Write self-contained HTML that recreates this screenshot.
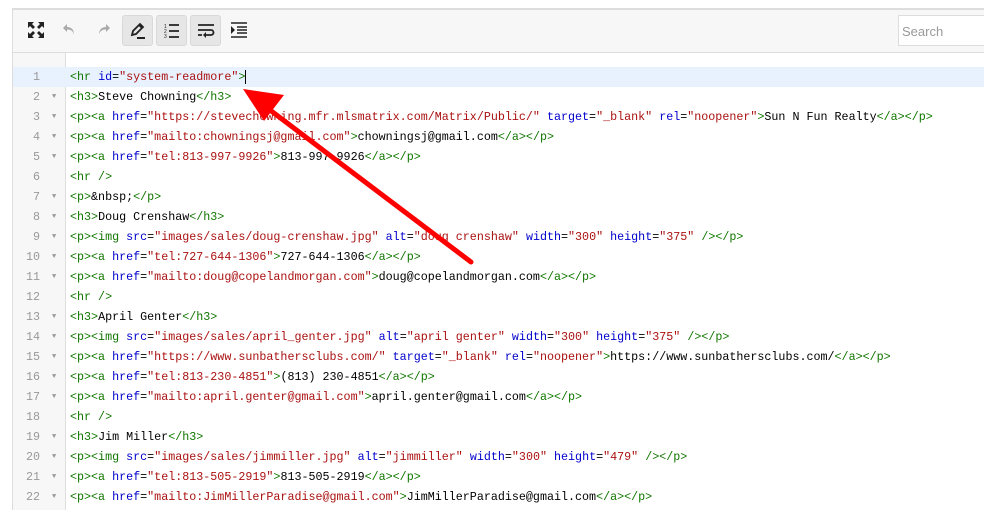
<!DOCTYPE html>
<html><head><style>
body{margin:0;width:984px;height:510px;overflow:hidden;background:#fff;font-family:"Liberation Sans",sans-serif;position:relative}
.top{position:absolute;left:12px;right:0;top:8px;height:2px;background:#ddd}
.tb{position:absolute;left:12px;right:0;top:10px;height:42px;background:#f7f7f7;border-left:1px solid #ddd;border-bottom:1px solid #ddd}
.btn{position:absolute;top:5px;width:31px;height:31px;border-radius:3px}
.btn.on{background:#e6e6e6;border:1px solid #d9d9d9;box-sizing:border-box}
.btn svg{position:absolute;left:6px;top:6px}
.search{position:absolute;left:885px;top:5px;width:100px;height:31px;border:1px solid #ddd;background:#fff;box-sizing:border-box;color:#999;font-size:13px;padding:8px 0 0 3px}
.ed{position:absolute;left:12px;right:0;top:53px;bottom:0;border-left:1px solid #ddd}
.gut{position:absolute;left:0;top:0;width:52px;bottom:0;background:#f7f7f7;border-right:1px solid #ddd}
.code{position:absolute;left:0;top:14px;right:0;font-family:"Liberation Mono",monospace;font-size:11.7px}
.l{height:20px;line-height:20px;position:relative;white-space:pre}
.l.act{background:#e8f2ff}
.n{position:absolute;left:0;width:27px;text-align:right;color:#999}
.f{position:absolute;left:39px;color:#999;font-size:7px}
.t{position:absolute;left:57px}
.g{color:#170}.b{color:#00c}.s{color:#a11}
</style></head><body>
<div class="top"></div>
<div class="tb">
<div class="btn" style="left:8px"><svg width="18" height="18" viewBox="0 0 18 18" fill="#222"><path d="M1 1h6L5 3l3 3-2 2-3-3-2 2zM17 1v6l-2-2-3 3-2-2 3-3-2-2zM1 17v-6l2 2 3-3 2 2-3 3 2 2zM17 17h-6l2-2-3-3 2-2 3 3 2-2z"/></svg></div>
<div class="btn" style="left:42px"><svg width="18" height="18" viewBox="0 0 18 18"><path d="M6 3L2 7l4 4V8.5c4 0 6 1.5 7 5 0-5-3-7.5-7-7.5z" fill="#aaa"/></svg></div>
<div class="btn" style="left:75px"><svg width="18" height="18" viewBox="0 0 18 18"><path d="M12 3l4 4-4 4V8.5c-4 0-6 1.5-7 5 0-5 3-7.5 7-7.5z" fill="#aaa"/></svg></div>
<div class="btn on" style="left:109px"><svg width="18" height="18" viewBox="0 0 18 18"><path d="M3 13l1-4 7-7 3 3-7 7zM10 3l3 3" stroke="#222" stroke-width="1.8" fill="none"/><path d="M8 15h8v2H8z" fill="#222"/></svg></div>
<div class="btn on" style="left:143px"><svg width="18" height="18" viewBox="0 0 18 18"><text x="1" y="6" font-size="5" fill="#222">1</text><text x="1" y="11" font-size="5" fill="#222">2</text><text x="1" y="16" font-size="5" fill="#222">3</text><path d="M6 3h10M6 9h10M6 15h10" stroke="#222" stroke-width="1.8"/></svg></div>
<div class="btn on" style="left:177px"><svg width="18" height="18" viewBox="0 0 18 18"><path d="M1 3h16M1 8h13a2.5 2.5 0 010 5H9M1 13h4" stroke="#222" stroke-width="1.8" fill="none"/><path d="M9 10v6l-3-3z" fill="#222"/></svg></div>
<div class="btn" style="left:211px"><svg width="18" height="18" viewBox="0 0 18 18"><path d="M1 2h16M7 6h10M7 9h10M7 12h10M1 16h16" stroke="#222" stroke-width="1.6"/><path d="M1 5v8l4-4z" fill="#222"/></svg></div>
<div class="search">Search</div>
</div>
<div class="ed"><div class="gut"></div>
<div class="code">
<div class="l act"><span class="n">1</span><span class="t"><span class="g">&lt;hr</span> <span class="b">id</span>=<span class="s">"system-readmore"</span><span class="g">&gt;</span><span style="border-left:1px solid #000"> </span></span></div>
<div class="l"><span class="n">2</span><span class="f">▼</span><span class="t"><span class="g">&lt;h3&gt;</span>Steve Chowning<span class="g">&lt;/h3&gt;</span></span></div>
<div class="l"><span class="n">3</span><span class="f">▼</span><span class="t"><span class="g">&lt;p&gt;&lt;a</span> <span class="b">href</span>=<span class="s">"https://stevechowning.mfr.mlsmatrix.com/Matrix/Public/"</span> <span class="b">target</span>=<span class="s">"_blank"</span> <span class="b">rel</span>=<span class="s">"noopener"</span><span class="g">&gt;</span>Sun N Fun Realty<span class="g">&lt;/a&gt;&lt;/p&gt;</span></span></div>
<div class="l"><span class="n">4</span><span class="f">▼</span><span class="t"><span class="g">&lt;p&gt;&lt;a</span> <span class="b">href</span>=<span class="s">"mailto:chowningsj@gmail.com"</span><span class="g">&gt;</span>chowningsj@gmail.com<span class="g">&lt;/a&gt;&lt;/p&gt;</span></span></div>
<div class="l"><span class="n">5</span><span class="f">▼</span><span class="t"><span class="g">&lt;p&gt;&lt;a</span> <span class="b">href</span>=<span class="s">"tel:813-997-9926"</span><span class="g">&gt;</span>813-997-9926<span class="g">&lt;/a&gt;&lt;/p&gt;</span></span></div>
<div class="l"><span class="n">6</span><span class="t"><span class="g">&lt;hr /&gt;</span></span></div>
<div class="l"><span class="n">7</span><span class="f">▼</span><span class="t"><span class="g">&lt;p&gt;</span>&amp;nbsp;<span class="g">&lt;/p&gt;</span></span></div>
<div class="l"><span class="n">8</span><span class="f">▼</span><span class="t"><span class="g">&lt;h3&gt;</span>Doug Crenshaw<span class="g">&lt;/h3&gt;</span></span></div>
<div class="l"><span class="n">9</span><span class="f">▼</span><span class="t"><span class="g">&lt;p&gt;&lt;img</span> <span class="b">src</span>=<span class="s">"images/sales/doug-crenshaw.jpg"</span> <span class="b">alt</span>=<span class="s">"doug crenshaw"</span> <span class="b">width</span>=<span class="s">"300"</span> <span class="b">height</span>=<span class="s">"375"</span> <span class="g">/&gt;&lt;/p&gt;</span></span></div>
<div class="l"><span class="n">10</span><span class="f">▼</span><span class="t"><span class="g">&lt;p&gt;&lt;a</span> <span class="b">href</span>=<span class="s">"tel:727-644-1306"</span><span class="g">&gt;</span>727-644-1306<span class="g">&lt;/a&gt;&lt;/p&gt;</span></span></div>
<div class="l"><span class="n">11</span><span class="f">▼</span><span class="t"><span class="g">&lt;p&gt;&lt;a</span> <span class="b">href</span>=<span class="s">"mailto:doug@copelandmorgan.com"</span><span class="g">&gt;</span>doug@copelandmorgan.com<span class="g">&lt;/a&gt;&lt;/p&gt;</span></span></div>
<div class="l"><span class="n">12</span><span class="t"><span class="g">&lt;hr /&gt;</span></span></div>
<div class="l"><span class="n">13</span><span class="f">▼</span><span class="t"><span class="g">&lt;h3&gt;</span>April Genter<span class="g">&lt;/h3&gt;</span></span></div>
<div class="l"><span class="n">14</span><span class="f">▼</span><span class="t"><span class="g">&lt;p&gt;&lt;img</span> <span class="b">src</span>=<span class="s">"images/sales/april_genter.jpg"</span> <span class="b">alt</span>=<span class="s">"april genter"</span> <span class="b">width</span>=<span class="s">"300"</span> <span class="b">height</span>=<span class="s">"375"</span> <span class="g">/&gt;&lt;/p&gt;</span></span></div>
<div class="l"><span class="n">15</span><span class="f">▼</span><span class="t"><span class="g">&lt;p&gt;&lt;a</span> <span class="b">href</span>=<span class="s">"https://www.sunbathersclubs.com/"</span> <span class="b">target</span>=<span class="s">"_blank"</span> <span class="b">rel</span>=<span class="s">"noopener"</span><span class="g">&gt;</span>https://www.sunbathersclubs.com/<span class="g">&lt;/a&gt;&lt;/p&gt;</span></span></div>
<div class="l"><span class="n">16</span><span class="f">▼</span><span class="t"><span class="g">&lt;p&gt;&lt;a</span> <span class="b">href</span>=<span class="s">"tel:813-230-4851"</span><span class="g">&gt;</span>(813) 230-4851<span class="g">&lt;/a&gt;&lt;/p&gt;</span></span></div>
<div class="l"><span class="n">17</span><span class="f">▼</span><span class="t"><span class="g">&lt;p&gt;&lt;a</span> <span class="b">href</span>=<span class="s">"mailto:april.genter@gmail.com"</span><span class="g">&gt;</span>april.genter@gmail.com<span class="g">&lt;/a&gt;&lt;/p&gt;</span></span></div>
<div class="l"><span class="n">18</span><span class="t"><span class="g">&lt;hr /&gt;</span></span></div>
<div class="l"><span class="n">19</span><span class="f">▼</span><span class="t"><span class="g">&lt;h3&gt;</span>Jim Miller<span class="g">&lt;/h3&gt;</span></span></div>
<div class="l"><span class="n">20</span><span class="f">▼</span><span class="t"><span class="g">&lt;p&gt;&lt;img</span> <span class="b">src</span>=<span class="s">"images/sales/jimmiller.jpg"</span> <span class="b">alt</span>=<span class="s">"jimmiller"</span> <span class="b">width</span>=<span class="s">"300"</span> <span class="b">height</span>=<span class="s">"479"</span> <span class="g">/&gt;&lt;/p&gt;</span></span></div>
<div class="l"><span class="n">21</span><span class="f">▼</span><span class="t"><span class="g">&lt;p&gt;&lt;a</span> <span class="b">href</span>=<span class="s">"tel:813-505-2919"</span><span class="g">&gt;</span>813-505-2919<span class="g">&lt;/a&gt;&lt;/p&gt;</span></span></div>
<div class="l"><span class="n">22</span><span class="f">▼</span><span class="t"><span class="g">&lt;p&gt;&lt;a</span> <span class="b">href</span>=<span class="s">"mailto:JimMillerParadise@gmail.com"</span><span class="g">&gt;</span>JimMillerParadise@gmail.com<span class="g">&lt;/a&gt;&lt;/p&gt;</span></span></div>
</div></div>
<svg style="position:absolute;left:0;top:0" width="984" height="510"><path d="M471 262L262 104" stroke="#f00" stroke-width="5" stroke-linecap="round"/><path d="M243 89L284 95 264 121z" fill="#f00"/></svg>
</body></html>
